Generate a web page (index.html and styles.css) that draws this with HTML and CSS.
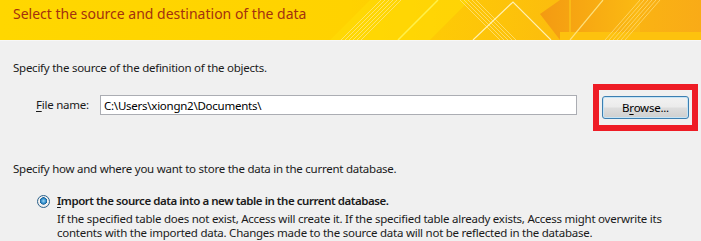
FILE: index.html
```html
<!DOCTYPE html>
<html>
<head>
<meta charset="utf-8">
<link rel="stylesheet" href="styles.css">
</head>
<body>
<header class="banner">
  <svg class="banner-art" width="701" height="40" viewBox="0 0 701 40" preserveAspectRatio="none">
    <defs>
      <linearGradient id="bg" x1="0" y1="0" x2="1" y2="0">
        <stop offset="0" stop-color="#ffd700"/>
        <stop offset="0.5" stop-color="#ffd200"/>
        <stop offset="0.72" stop-color="#fdc30a"/>
        <stop offset="1" stop-color="#f9ab17"/>
      </linearGradient>
      <linearGradient id="org" x1="0" y1="0" x2="1" y2="0">
        <stop offset="0" stop-color="#f49a12"/>
        <stop offset="1" stop-color="#fbba12"/>
      </linearGradient>
    </defs>
    <rect width="701" height="40" fill="url(#bg)"/>
    <polygon points="330,40 370,0 470,0 430,40" fill="#ffdc05" opacity="0.6"/>
    <polygon points="540,14 560,0 640,0 640,32 600,40 560,40" fill="url(#org)"/>
    <polygon points="560,32 701,32 701,40 560,40" fill="#fdc20e"/>
    <g stroke="#ffe680" stroke-width="1" opacity="0.8">
      <line x1="341" y1="40" x2="381" y2="0"/>
      <line x1="345" y1="40" x2="385" y2="0"/>
      <line x1="349" y1="40" x2="389" y2="0"/>
      <line x1="353" y1="40" x2="393" y2="0"/>
      <line x1="357" y1="40" x2="397" y2="0"/>
      <line x1="361" y1="40" x2="401" y2="0"/>
    </g>
    <line x1="398" y1="40" x2="438" y2="0" stroke="#fff04a" stroke-width="1.5"/>
    <g stroke="#ffe27a" stroke-width="1" opacity="0.8">
      <line x1="460" y1="0" x2="500" y2="40"/>
      <line x1="464" y1="0" x2="504" y2="40"/>
      <line x1="468" y1="0" x2="508" y2="40"/>
      <line x1="472" y1="0" x2="512" y2="40"/>
      <line x1="476" y1="0" x2="516" y2="40"/>
    </g>
    <polyline points="473,40 513,2 551,40" fill="none" stroke="#fff0b0" stroke-width="1.2"/>
    <line x1="570" y1="0" x2="570" y2="32" stroke="#fcc91a" stroke-width="1.2"/>
    <line x1="570" y1="40" x2="603" y2="0" stroke="#fde07a" stroke-width="1.2"/>
    <g stroke="#ffd970" stroke-width="1" opacity="0.85">
      <line x1="605" y1="40" x2="640" y2="0"/>
      <line x1="609" y1="40" x2="644" y2="0"/>
      <line x1="613" y1="40" x2="648" y2="0"/>
      <line x1="617" y1="40" x2="652" y2="0"/>
      <line x1="621" y1="40" x2="656" y2="0"/>
      <line x1="625" y1="40" x2="660" y2="0"/>
    </g>
  </svg>
  <h1 class="banner-title">Select the source and destination of the data</h1>
</header>

<main class="content">
  <p class="lead">Specify the source of the definition of the objects.</p>

  <div class="file-row">
    <label class="file-label" for="file"><u>F</u>ile name:</label>
    <input class="file-input" id="file" type="text" value="C:\Users\xiongn2\Documents\">
    <div class="highlight">
      <button class="browse">B<u>r</u>owse...</button>
    </div>
  </div>

  <p class="lead second">Specify how and where you want to store the data in the current database.</p>

  <div class="option">
    <span class="radio"></span>
    <div class="option-text">
      <div class="option-title"><u>I</u>mport the source data into a new table in the current database.</div>
      <div class="option-desc">If the specified table does not exist, Access will create it. If the specified table already exists, Access might overwrite its<br>contents with the imported data. Changes made to the source data will not be reflected in the database.</div>
    </div>
  </div>
</main>
</body>
</html>
```

FILE: styles.css
```css
* { box-sizing: border-box; }

html, body {
  margin: 0;
  padding: 0;
}

body {
  width: 701px;
  height: 241px;
  overflow: hidden;
  background: #f0f0f0;
  font-family: "Noto Sans", "Open Sans", sans-serif;
  font-size: 11.5px;
  letter-spacing: -0.25px;
  color: #1a1a1a;
}

.banner {
  position: relative;
  height: 41px;
  border-bottom: 1px solid #f7f7f7;
}

.banner-art {
  position: absolute;
  left: 0;
  top: 0;
  display: block;
}

.banner-title {
  position: relative;
  margin: 0;
  padding: 4px 0 0 13px;
  font-weight: 400;
  font-size: 14px;
  letter-spacing: 0;
  line-height: 20px;
  color: #a3310f;
}

.content {
  padding: 0 0 0 13px;
}

.lead {
  margin: 19px 0 0 0;
  line-height: 16px;
}

.lead.second {
  margin-top: 30px;
}

.file-row {
  display: flex;
  align-items: flex-start;
  margin-top: 8px;
  padding-left: 23px;
}

.file-label {
  width: 64px;
  margin-top: 13px;
  line-height: 16px;
}

.file-label u, .browse u, .option-title u {
  text-decoration-thickness: 1px;
  text-underline-offset: 2px;
}

.file-input {
  width: 477px;
  height: 20px;
  margin: 11px 16px 0 0;
  padding: 0 3px;
  border: 1px solid #abadb3;
  background: #fff;
  font-family: inherit;
  font-size: 11.5px;
  letter-spacing: -0.25px;
  color: #000;
  outline: none;
}

.highlight {
  padding: 6px 3px;
  border: 6px solid #ee1c25;
}

.browse {
  display: block;
  width: 87px;
  height: 23px;
  padding: 0;
  border: 1px solid #3c7fb1;
  border-radius: 3px;
  background: linear-gradient(#f2f2f2 0%, #ebebeb 48%, #dddddd 52%, #cfcfcf 100%);
  box-shadow: inset 0 0 0 1px #c5e4f6;
  font-family: inherit;
  font-size: 11.5px;
  letter-spacing: -0.25px;
  color: #000;
}

.option {
  display: flex;
  align-items: flex-start;
  margin-top: 16px;
  padding-left: 24px;
}

.radio {
  flex: none;
  width: 13px;
  height: 13px;
  margin: 2px 7px 0 0;
  border-radius: 50%;
  border: 1px solid #2c628b;
  background: radial-gradient(circle at 50% 45%, #9ed6f5 0%, #2d8bc9 30%, #1d5f93 42%, #f4f4f4 48%, #dcdcdc 100%);
}

.option-title {
  font-weight: 600;
  letter-spacing: -0.45px;
  line-height: 16px;
}

.option-desc {
  margin-top: 3px;
  white-space: nowrap;
  line-height: 14px;
}
```
